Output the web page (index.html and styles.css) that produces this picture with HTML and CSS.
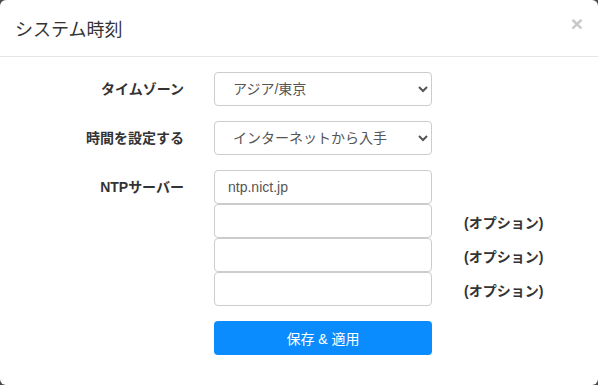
FILE: index.html
```html
<!DOCTYPE html>
<html lang="ja">
<head>
  <meta charset="UTF-8" />
  <meta name="viewport" content="width=device-width, initial-scale=1.0" />
  <title>システム時刻</title>
  <link rel="stylesheet" href="styles.css">
</head>
<body>
  <div class="modal">
    <div class="modal-header">
      <h4>システム時刻</h4>
      <button class="close" type="button">&times;</button>
    </div>

    <div class="modal-body">
      <div class="row">
        <label class="label">タイムゾーン</label>
        <select class="control">
          <option>アジア/東京</option>
        </select>
      </div>

      <div class="row">
        <label class="label">時間を設定する</label>
        <select class="control">
          <option>インターネットから入手</option>
        </select>
      </div>

      <div class="ntp">
        <label class="label">NTPサーバー</label>
        <input class="control" type="text" value="ntp.nict.jp" />
        <span></span>
        <span></span>
        <input class="control" type="text" />
        <span class="hint">(オプション)</span>
        <span></span>
        <input class="control" type="text" />
        <span class="hint">(オプション)</span>
        <span></span>
        <input class="control" type="text" />
        <span class="hint">(オプション)</span>
      </div>

      <div class="row">
        <span></span>
        <button class="btn-primary" type="button">保存 &amp; 適用</button>
      </div>
    </div>
  </div>
</body>
</html>
```

FILE: styles.css
```css
html, body {
  height: 100%;
}
body {
  margin: 0;
  background: #4a4a4a;
  font-family: "Liberation Sans", "Noto Sans CJK JP", sans-serif;
  color: #333;
}
.modal {
  background: #fff;
  border-radius: 6px;
  height: 100%;
  box-sizing: border-box;
}
.modal-header {
  display: flex;
  align-items: center;
  justify-content: space-between;
  height: 56px;
  padding: 0 15px;
  border-bottom: 1px solid #e5e5e5;
}
.modal-header h4 {
  margin: 0;
  font-size: 18px;
  font-weight: normal;
  color: #333;
}
.close {
  border: 0;
  background: none;
  padding: 0;
  margin-top: -10px;
  font-family: "Liberation Sans", sans-serif;
  font-size: 21px;
  font-weight: bold;
  line-height: 1;
  color: #c8c8c8;
}
.modal-body {
  padding: 15px;
}
.row, .ntp {
  display: grid;
  grid-template-columns: 169px 218px auto;
  column-gap: 30px;
  align-items: center;
  margin-bottom: 15px;
}
.label {
  text-align: right;
  margin-top: -3px;
  font-size: 14px;
  font-weight: bold;
  color: #333;
}
.control {
  box-sizing: border-box;
  width: 218px;
  height: 34px;
  margin: 0;
  border: 1px solid #ccc;
  border-radius: 4px;
  background: #fff;
  font-family: "Liberation Sans", "Noto Sans CJK JP", sans-serif;
  font-size: 14px;
  color: #555;
}
select.control {
  padding: 0 8px 0 14px;
}
input.control {
  padding: 0 13px;
}
.hint {
  padding-left: 2px;
  padding-top: 2px;
  font-size: 14px;
  font-weight: bold;
  color: #333;
}
.btn-primary {
  width: 218px;
  height: 34px;
  border: 0;
  border-radius: 4px;
  background: #0a8cff;
  color: #fff;
  font-family: "Liberation Sans", "Noto Sans CJK JP", sans-serif;
  font-size: 14px;
}
```
